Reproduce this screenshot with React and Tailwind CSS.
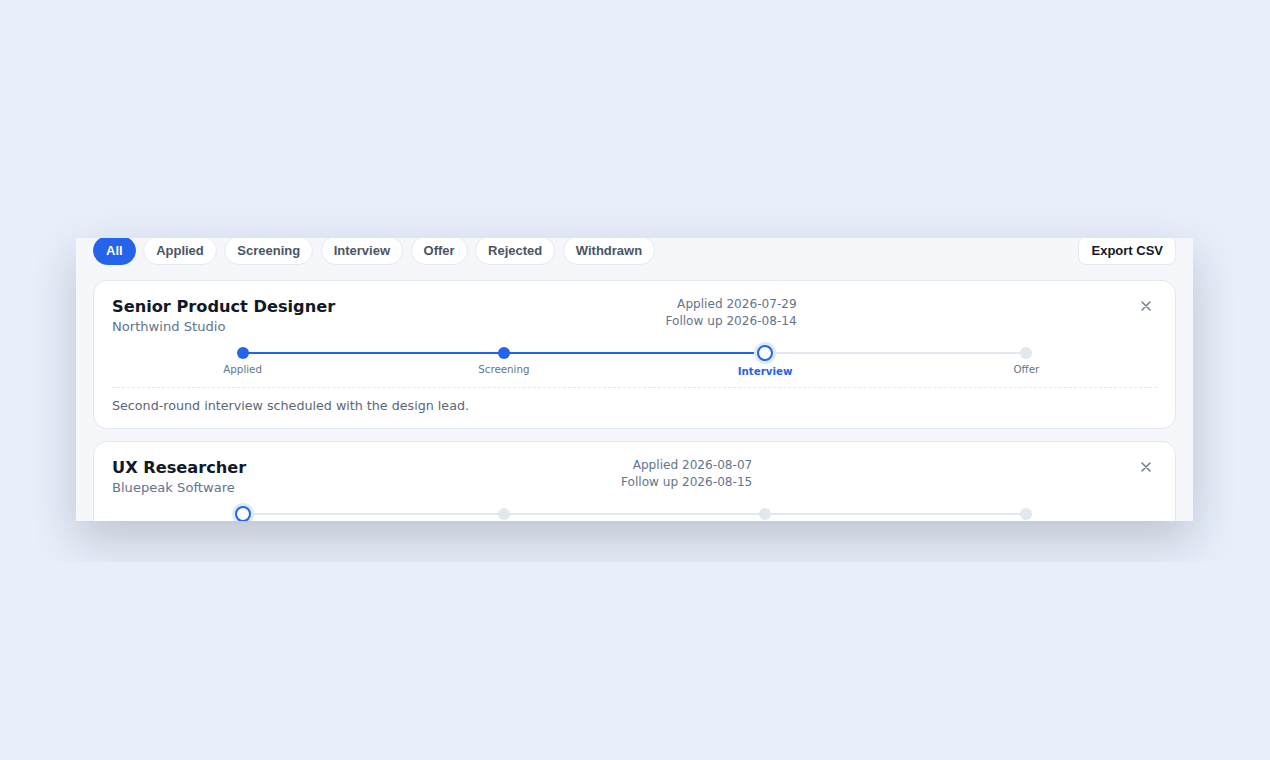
import React from "react";

const FILTERS = ["All", "Applied", "Screening", "Interview", "Offer", "Rejected", "Withdrawn"];
const STAGES = ["Applied", "Screening", "Interview", "Offer"];

const APPLICATIONS = [
  {
    id: 1,
    title: "Senior Product Designer",
    company: "Northwind Studio",
    applied: "2026-07-29",
    followUp: "2026-08-14",
    stage: 2,
    note: "Second-round interview scheduled with the design lead.",
  },
  {
    id: 2,
    title: "UX Researcher",
    company: "Bluepeak Software",
    applied: "2026-08-07",
    followUp: "2026-08-15",
    stage: 0,
    note: "Recruiter call booked for next week.",
  },
];

function CloseIcon() {
  return (
    <svg width="10" height="10" viewBox="0 0 10 10" fill="none" stroke="#64748b" strokeWidth="1.4" strokeLinecap="round">
      <path d="M1 1l8 8M9 1l-8 8" />
    </svg>
  );
}

function Stepper({ stage }) {
  return (
    <div className="grid grid-cols-4 mt-[7px]">
      {STAGES.map((label, i) => {
        const done = i < stage;
        const current = i === stage;
        return (
          <div key={label} className="relative flex flex-col items-center">
            {i < STAGES.length - 1 && (
              <span
                className={`absolute left-1/2 top-[8px] h-[2px] w-full ${
                  i < stage ? "bg-[#2563eb]" : "bg-[#e2e8f0]"
                }`}
              />
            )}
            <div className="relative flex h-[18px] items-center justify-center">
              {current ? (
                <span className="h-4 w-4 rounded-full border-2 border-[#2563eb] bg-white ring-[3px] ring-[#dbeafe]" />
              ) : (
                <span className={`h-3 w-3 rounded-full ${done ? "bg-[#2563eb]" : "bg-[#e2e8f0]"}`} />
              )}
            </div>
            <span
              className={`text-[10.3px] leading-[14px] ${
                current ? "mt-[2px] font-bold text-[#2563eb]" : "text-[#64748b]"
              }`}
            >
              {label}
            </span>
          </div>
        );
      })}
    </div>
  );
}

function ApplicationCard({ app }) {
  return (
    <div className="rounded-[14px] border border-[#e2e8f0] bg-white px-[18px] pt-4 pb-[12px] font-['DejaVu_Sans',sans-serif]">
      <div className="flex items-start justify-between">
        <div>
          <h3 className="text-[16.2px] font-bold leading-5 text-[#111827]">{app.title}</h3>
          <p className="text-[13.1px] leading-5 text-[#64748b]">{app.company}</p>
        </div>
        <div className="-mt-px pr-2 text-right text-[12.1px] leading-[17px] text-[#64748b]">
          <div>Applied {app.applied}</div>
          <div>Follow up {app.followUp}</div>
        </div>
        <button className="-mt-px flex h-5 w-[22px] items-center justify-center">
          <CloseIcon />
        </button>
      </div>
      <Stepper stage={app.stage} />
      <div className="mt-[9px] border-t border-dashed border-[#e2e8f0] pt-2">
        <p className="text-[12.7px] leading-5 text-[#5b6678]">{app.note}</p>
      </div>
    </div>
  );
}

export default function App() {
  return (
    <div className="flex min-h-screen items-center justify-center bg-[#e8effb]">
      <div className="overflow-hidden pt-10 pl-10 pr-[41px] pb-[41px]">
        <div className="h-[283px] w-[1117px] overflow-hidden bg-[#f5f7fb] px-[17px] shadow-[0_18px_44px_rgba(15,23,42,0.2)]">
          <div className="-mt-[2px] flex items-center justify-between font-['Liberation_Sans',Arial,sans-serif]">
            <div className="flex gap-[7.5px]">
              {FILTERS.map((f, i) => (
                <button
                  key={f}
                  className={`rounded-full border px-3 py-[6px] text-[13px] font-bold leading-[15px] ${
                    i === 0
                      ? "border-[#2563eb] bg-[#2563eb] text-white"
                      : "border-[#e5e9f0] bg-white text-[#4b5563]"
                  }`}
                >
                  {f}
                </button>
              ))}
            </div>
            <button className="rounded-lg border border-[#e5e9f0] bg-white px-3 py-[6px] text-[13px] font-bold leading-[15px] text-[#111827]">
              Export CSV
            </button>
          </div>
          <div className="mt-[15px] flex flex-col gap-3">
            {APPLICATIONS.map((app) => (
              <ApplicationCard key={app.id} app={app} />
            ))}
          </div>
        </div>
      </div>
    </div>
  );
}
